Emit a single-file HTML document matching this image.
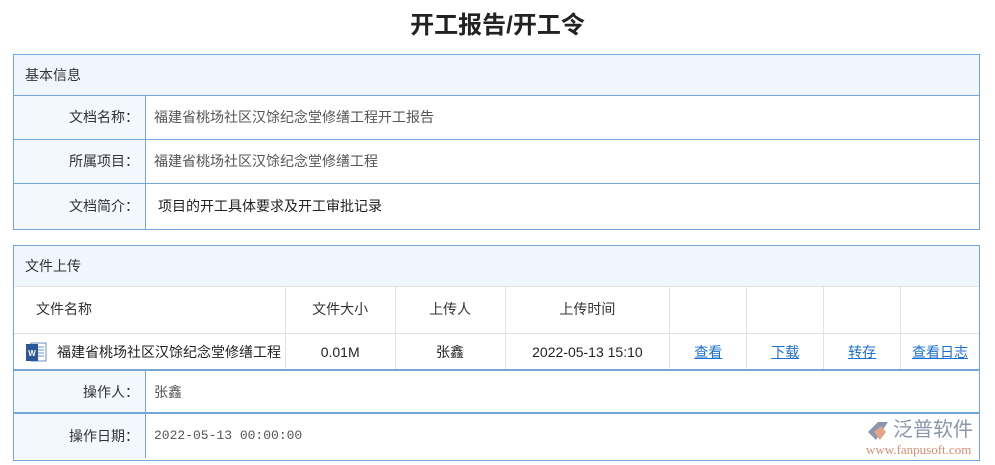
<!DOCTYPE html>
<html><head><meta charset="utf-8"><style>
*{margin:0;padding:0;box-sizing:border-box}
body{width:995px;height:465px;background:#fff;font-family:"Liberation Sans","Noto Sans CJK SC",sans-serif;font-size:14px;color:#333;position:relative;overflow:hidden}
.a{position:absolute}
h1{position:absolute;left:0;width:995px;top:5px;text-align:center;font-size:24px;font-weight:bold;color:#222}
.box{position:absolute;left:13px;width:967px;border:1px solid #74a6d8}
.hd{background:#f0f6fe;height:41px;line-height:41px;padding-left:11px;border-bottom:1px solid #74a6d8}
.row{position:relative;border-bottom:1px solid #74a6d8;display:flex}
.row:last-child{border-bottom:none}
.lb{width:132px;background:#f3f8fe;border-right:1px solid #74a6d8;text-align:right;padding-right:6px}
.v{padding-left:8px;color:#555}
.cell{border-right:1px solid #e2e2e2;text-align:center}
a{color:#1b6fd0;text-decoration:underline}
</style></head><body>
<h1>开工报告/开工令</h1>
<div class="box" style="top:54px;height:176px">
<div class="hd" style="line-height:40px">基本信息</div>
<div class="row" style="height:44px;line-height:43px"><div class="lb">文档名称：</div><div class="v">福建省桃场社区汉馀纪念堂修缮工程开工报告</div></div>
<div class="row" style="height:44px;line-height:42px"><div class="lb">所属项目：</div><div class="v">福建省桃场社区汉馀纪念堂修缮工程</div></div>
<div class="row" style="height:45px;line-height:45px"><div class="lb">文档简介：</div><div class="v" style="padding-left:12px;color:#222">项目的开工具体要求及开工审批记录</div></div>
</div>
<div class="box" style="top:245px;height:216px">
<div class="hd" style="border-bottom:1px solid #e2e2e2">文件上传</div>
<div style="display:flex;height:47px;line-height:44px;border-bottom:1px solid #e2e2e2">
<div class="cell" style="width:272px;text-align:left;padding-left:22px">文件名称</div>
<div class="cell" style="width:110px">文件大小</div>
<div class="cell" style="width:110px">上传人</div>
<div class="cell" style="width:165px">上传时间</div>
<div class="cell" style="width:77px"></div><div class="cell" style="width:77px"></div><div class="cell" style="width:77px"></div><div style="width:78px"></div>
</div>
<div style="display:flex;height:37px;line-height:36px;border-bottom:2px solid #74a6d8;color:#222">
<div class="cell" style="width:272px;text-align:left;padding-left:11px;position:relative;white-space:nowrap;overflow:hidden"><svg width="22" height="22" viewBox="0 0 22 22" style="position:absolute;left:11px;top:7px"><rect x="6" y="2" width="15" height="18" fill="#fff" stroke="#6a8fc8"/><line x1="12" y1="6" x2="19" y2="6" stroke="#6a8fc8"/><line x1="12" y1="9" x2="19" y2="9" stroke="#6a8fc8"/><line x1="12" y1="12" x2="19" y2="12" stroke="#6a8fc8"/><line x1="12" y1="15" x2="19" y2="15" stroke="#6a8fc8"/><rect x="1" y="3" width="12" height="17" fill="#2b5797"/><text x="7" y="15" font-size="8" fill="#fff" text-anchor="middle" font-weight="bold" font-family="Liberation Sans">W</text></svg><span style="padding-left:32px">福建省桃场社区汉馀纪念堂修缮工程</span></div>
<div class="cell" style="width:110px">0.01M</div>
<div class="cell" style="width:110px">张鑫</div>
<div class="cell" style="width:165px">2022-05-13 15:10</div>
<div class="cell" style="width:77px"><a>查看</a></div><div class="cell" style="width:77px"><a>下载</a></div><div class="cell" style="width:77px"><a>转存</a></div><div style="width:78px;text-align:center"><a>查看日志</a></div>
</div>
<div class="row" style="height:43px;line-height:42px;border-bottom:2px solid #74a6d8"><div class="lb">操作人：</div><div class="v">张鑫</div></div>
<div class="row" style="height:44px;line-height:44px"><div class="lb">操作日期：</div><div class="v" style="font-family:'Liberation Mono',monospace;font-size:13px">2022-05-13 00:00:00</div></div>
</div>
<div class="a" style="left:866px;top:420px;width:24px;height:22px">
<svg width="24" height="22" viewBox="0 0 24 22"><path d="M2 12 L12 2 L22 2 L10 20 Z" fill="#8a96ac"/><path d="M8 12 L15 6 L20 12 L14 20 Z" fill="#e2a488"/></svg></div>
<div class="a" style="left:893px;top:418px;font-size:20px;line-height:24px;color:#8a96ac">泛普软件</div>
<div class="a" style="left:866px;top:443px;font-size:13px;line-height:14px;color:#d58f74;font-family:'Liberation Serif',serif">www.fanpusoft.com</div>
</body></html>
